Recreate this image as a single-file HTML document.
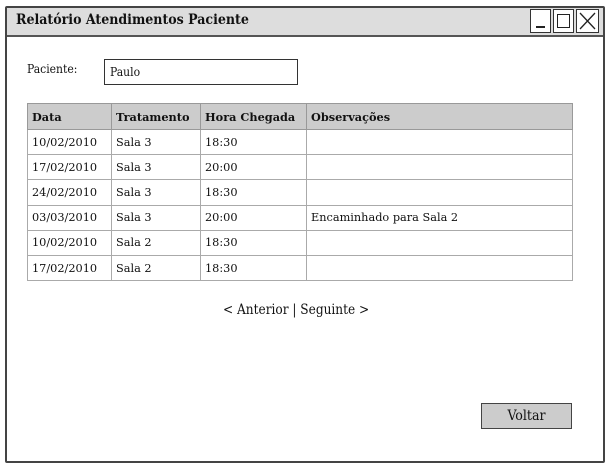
<!DOCTYPE html>
<html><head><style>
body{margin:0;width:608px;height:467px;background:#fff;font-family:"DejaVu Serif","Liberation Serif",serif;color:#111;position:relative;overflow:hidden}
.c{font-family:"DejaVu Serif Condensed","DejaVu Serif",serif;font-stretch:condensed}
.a{position:absolute}
.win{left:5px;top:6px;width:596px;height:453px;border:2px solid #444;border-radius:2px}
.tb{left:7px;top:8px;width:596px;height:27px;background:#ddd;border-bottom:2px solid #555}
.title{left:16px;top:12px;font-size:14px;font-weight:bold}
.btn{top:9px;width:19px;height:22px;border:1.5px solid #333;background:#fff}
table{border-collapse:collapse;font-size:11.3px}
td,th{border:1px solid #aaa;height:24.2px;padding:0 0 0 4px;text-align:left;vertical-align:middle}
th{background:#ccc;font-weight:bold;border-color:#999}
</style></head><body>
<div class="a win"></div>
<div class="a tb"></div>
<div class="a title c">Relatório Atendimentos Paciente</div>
<div class="a btn" style="left:530px"><div class="a" style="left:5px;top:16px;width:9px;height:1.5px;background:#222"></div></div>
<div class="a btn" style="left:553px"><div class="a" style="left:3px;top:4px;width:11px;height:12px;border:1.5px solid #222"></div></div>
<div class="a btn" style="left:576px;width:21px"><svg width="21" height="22"><path d="M3 3L18 19M18 3L3 19" stroke="#222" stroke-width="1.3"/></svg></div>
<div class="a c" style="left:27px;top:62px;font-size:12px">Paciente:</div>
<div class="a c" style="left:104px;top:59px;width:192px;height:24px;border:1.5px solid #333;font-size:12px;line-height:25px;text-indent:5px">Paulo</div>
<table class="a" style="left:27px;top:103px;width:546px">
<tr><th style="width:79px;height:25px">Data</th><th style="width:84px">Tratamento</th><th style="width:101px">Hora Chegada</th><th>Observações</th></tr>
<tr><td>10/02/2010</td><td>Sala 3</td><td>18:30</td><td></td></tr>
<tr><td>17/02/2010</td><td>Sala 3</td><td>20:00</td><td></td></tr>
<tr><td>24/02/2010</td><td>Sala 3</td><td>18:30</td><td></td></tr>
<tr><td>03/03/2010</td><td>Sala 3</td><td>20:00</td><td>Encaminhado para Sala 2</td></tr>
<tr><td>10/02/2010</td><td>Sala 2</td><td>18:30</td><td></td></tr>
<tr><td>17/02/2010</td><td>Sala 2</td><td>18:30</td><td></td></tr>
</table>
<div class="a c" style="left:223px;top:302px;font-size:13.5px">&lt; Anterior | Seguinte &gt;</div>
<div class="a c" style="left:481px;top:403px;width:89px;height:24px;background:#ccc;border:1.5px solid #444;font-size:14px;text-align:center;line-height:24px">Voltar</div>
</body></html>
